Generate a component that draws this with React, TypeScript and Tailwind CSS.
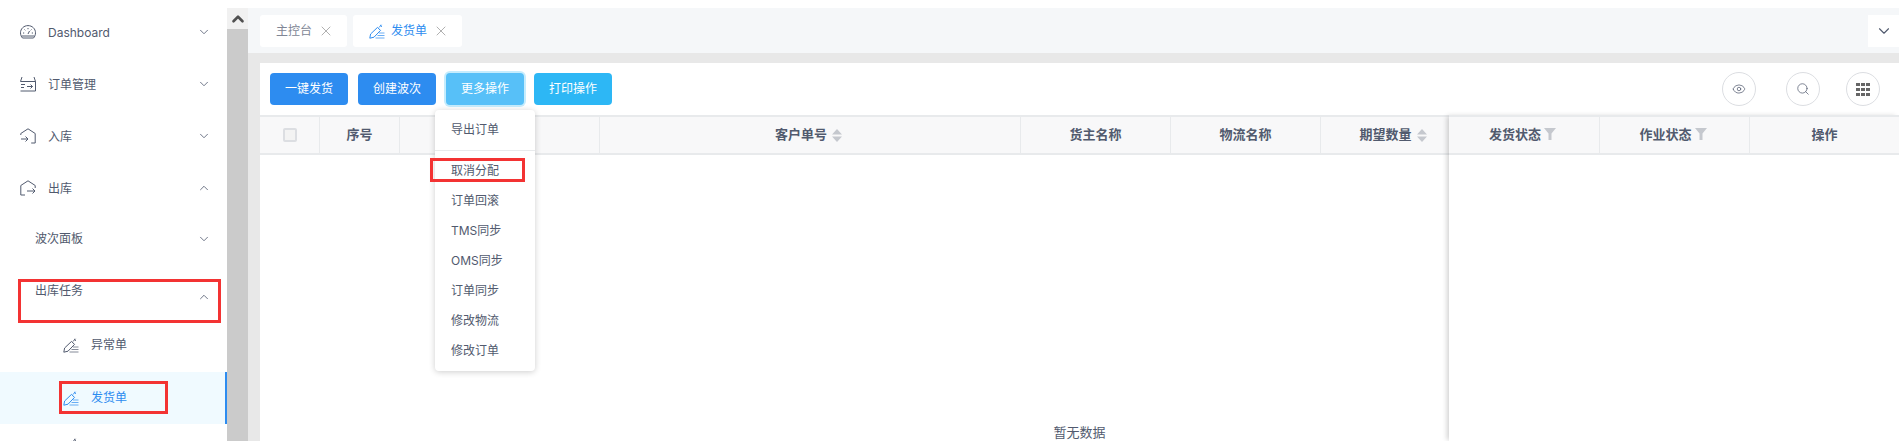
import React from "react";
import { ChevronDown, ChevronUp, Eye, Search, X } from "lucide-react";

const FONT = "font-['Inter','Noto_Sans_CJK_SC',sans-serif]";

const GaugeIcon = () => (
  <svg width="16" height="14" viewBox="0 0 16 14" fill="none" stroke="currentColor" strokeWidth="1">
    <path d="M2.5 13C1.2 11.6.5 9.8.5 7.8.5 3.8 3.8.6 8 .6s7.5 3.2 7.5 7.2c0 2-.7 3.8-2 5.2z" />
    <path d="M1.5 11h13M8 3v1.2M4.5 4.5l.8.8M11.5 4.5l-.8.8M3 8h1.2M11.8 8H13M8 9l1.5-3" />
  </svg>
);

const OrderIcon = () => (
  <svg width="16" height="16" viewBox="0 0 16 16" fill="none" stroke="currentColor" strokeWidth="1">
    <path d="M.5 5.5 2 1M15.5 5.5 14 1M.5 5.5h15v9.5H.5M15.5 5.5V15" />
    <path d="M1 8.5h4M1 11.5h3M7 10.5h5.5M10.5 8.5l2 2-2 2" />
  </svg>
);

const InboundIcon = () => (
  <svg width="16" height="16" viewBox="0 0 16 16" fill="none" stroke="currentColor" strokeWidth="1">
    <path d="M.8 7V5.5L8 .8l7.2 4.7V15h-4" />
    <path d="M1 11h7M5.5 8.5 8 11l-2.5 2.5" />
  </svg>
);

const OutboundIcon = () => (
  <svg width="16" height="16" viewBox="0 0 16 16" fill="none" stroke="currentColor" strokeWidth="1">
    <path d="M5 15H.8V5.5L8 .8l7.2 4.7V8" />
    <path d="M7 11h8M12.5 8.5 15 11l-2.5 2.5" />
  </svg>
);

const PenIcon = () => (
  <svg width="16" height="15" viewBox="0 0 16 15" fill="none" stroke="currentColor" strokeWidth="1">
    <path d="M.8 14.2 1.6 10l6.9-6.6 3 3L5 13.2z" />
    <path d="M10 3.5 12.5.8M11.2 1l1.8 1.8" />
    <path d="M10 9h5.5M8.5 11.5h7M6.5 14h9" opacity=".7" />
  </svg>
);

const SortIcon = () => (
  <svg width="10" height="13" viewBox="0 0 10 13" className="ml-[5px] text-[#c5c8ce]" fill="currentColor">
    <path d="M5 0l5 5.5H0zM5 13l5-5.5H0z" />
  </svg>
);

const FilterIcon = () => (
  <svg width="12" height="12" viewBox="0 0 12 12" className="mb-[3px] ml-[3px] text-[#c5c8ce]" fill="currentColor">
    <path d="M0 0h12L7.5 5.5V12h-3V5.5z" />
  </svg>
);

const GridIcon = () => (
  <svg width="14" height="13" viewBox="0 0 14 13" className="text-[#666]" fill="currentColor">
    <path d="M0 0h4v3H0zM5 0h4v3H5zM10 0h4v3h-4zM0 5h4v3H0zM5 5h4v3H5zM10 5h4v3h-4zM0 10h4v3H0zM5 10h4v3H5zM10 10h4v3h-4z" />
  </svg>
);

const MenuRow = ({
  icon,
  label,
  open,
  className,
}: {
  icon?: React.ReactNode;
  label: string;
  open?: boolean;
  className?: string;
}) => (
  <div className={`flex items-center justify-between pr-4 ${className}`}>
    <div className="flex items-center gap-3">
      {icon}
      <span className="pt-px">{label}</span>
    </div>
    {open ? <ChevronUp size={14} strokeWidth={1.4} /> : <ChevronDown size={14} strokeWidth={1.4} />}
  </div>
);

const Sidebar = () => (
  <aside className="relative w-[227px] shrink-0 bg-white text-[12px] text-[#515a6e]">
    <MenuRow icon={<GaugeIcon />} label="Dashboard" className="h-[50px] pb-[2px] pl-5" />
    <MenuRow icon={<OrderIcon />} label="订单管理" className="h-[52px] pl-5" />
    <MenuRow icon={<InboundIcon />} label="入库" className="h-[52px] pl-5" />
    <MenuRow icon={<OutboundIcon />} label="出库" open className="h-[52px] pl-5" />
    <MenuRow label="波次面板" className="h-[52px] pb-[3px] pl-[35px]" />
    <div className="relative flex h-[52px] justify-between pl-[35px] pr-4">
      <span className="pt-[16px]">出库任务</span>
      <ChevronUp size={14} strokeWidth={1.4} className="mt-[24px]" />
      <div className="absolute left-[18px] top-[13px] h-[44px] w-[203px] border-[3px] border-[#f33333]" />
    </div>
    <div className="flex h-[54px] items-center gap-3 pl-[63px]">
      <PenIcon />
      <span>异常单</span>
    </div>
    <div className="relative flex h-[52px] items-center gap-3 border-r-2 border-[#2d8cf0] bg-[#f0faff] pl-[63px] text-[#2d8cf0]">
      <PenIcon />
      <span>发货单</span>
      <div className="absolute left-[59px] top-[9px] h-[33px] w-[109px] border-[3px] border-[#f33333]" />
    </div>
    <div className="pl-[63px] pt-[14px]">
      <PenIcon />
    </div>
  </aside>
);

const Scrollbar = () => (
  <div className="w-[21px] shrink-0 bg-[#cbcbcb]">
    <div className="flex h-[21px] items-center justify-center bg-[#f1f1f1] text-[#505050]">
      <ChevronUp size={18} strokeWidth={3.5} />
    </div>
  </div>
);

const TabBar = () => (
  <div className="flex h-[45px] shrink-0 justify-between bg-[#f5f7f9] pl-3 pt-[7px] text-[12px]">
    <div className="flex gap-[6px]">
      <div className="flex h-[32px] w-[87px] items-center gap-[6px] rounded-[3px] bg-white pl-4 text-[#808695]">
        <span>主控台</span>
        <X size={16} strokeWidth={1} className="text-[#888]" />
      </div>
      <div className="flex h-[32px] w-[109px] items-center rounded-[3px] bg-white pl-4 text-[#2d8cf0]">
        <PenIcon />
        <span className="ml-[6px]">发货单</span>
        <X size={16} strokeWidth={1} className="ml-[6px] text-[#888]" />
      </div>
    </div>
    <div className="flex h-[32px] w-[31px] items-center justify-center bg-white text-[#515a6e]">
      <ChevronDown size={18} strokeWidth={1.5} />
    </div>
  </div>
);

const buttons = [
  { label: "一键发货", cls: "bg-[#2d8cf0]" },
  { label: "创建波次", cls: "bg-[#2d8cf0]" },
  { label: "更多操作", cls: "bg-[#57c0f8] ring-2 ring-[#c5ecfd]" },
  { label: "打印操作", cls: "bg-[#2db7f5]" },
];

const Toolbar = () => (
  <div className="flex h-[52px] shrink-0 items-center justify-between pl-[10px] pr-[19px]">
    <div className="flex gap-[10px]">
      {buttons.map((b) => (
        <button
          key={b.label}
          className={`flex h-[32px] w-[78px] items-center justify-center rounded-[4px] text-[12px] text-white ${b.cls}`}
        >
          {b.label}
        </button>
      ))}
    </div>
    <div className="flex items-center">
      <div className="flex h-[34px] w-[34px] items-center justify-center rounded-full border border-[#dcdee2] text-[#515a6e]">
        <Eye size={14} strokeWidth={1.25} />
      </div>
      <div className="ml-[30px] flex h-[34px] w-[34px] items-center justify-center rounded-full border border-[#dcdee2] text-[#515a6e]">
        <Search size={14} strokeWidth={1.25} />
      </div>
      <div className="ml-[26px] flex h-[34px] w-[34px] items-center justify-center rounded-full border border-[#dcdee2]">
        <GridIcon />
      </div>
    </div>
  </div>
);

const HeadCell = ({ className, children }: { className: string; children?: React.ReactNode }) => (
  <div className={`flex h-full items-center justify-center border-r border-[#e8eaec] ${className}`}>{children}</div>
);

const menuItems = ["订单回滚", "TMS同步", "OMS同步", "订单同步", "修改物流", "修改订单"];

const Dropdown = () => (
  <div className="absolute left-[175px] top-[47px] z-20 w-[100px] rounded-[4px] bg-white py-[5px] text-[12px] text-[#515a6e] shadow-[0_1px_6px_rgba(0,0,0,0.2)]">
    <div className="flex h-[30px] items-center pl-4">导出订单</div>
    <div className="mb-[5px] mt-[5px] h-px bg-[#e8eaec]" />
    <div className="relative flex h-[30px] items-center pl-4">
      取消分配
      <div className="absolute left-[-5px] top-[2px] h-[24px] w-[95px] border-[3px] border-[#f33333]" />
    </div>
    {menuItems.map((m) => (
      <div key={m} className="flex h-[30px] items-center pl-4">
        {m}
      </div>
    ))}
  </div>
);

const Table = () => (
  <div className="flex min-h-0 flex-1 text-[13px] text-[#515a6e]">
    <div className="w-[1189px] shrink-0">
      <div className="flex h-[40px] border-y-2 border-[#e8eaec] bg-[#f8f8f9] font-bold">
        <HeadCell className="w-[60px]">
          <span className="h-[14px] w-[14px] rounded-[2px] border-2 border-[#dcdee2] bg-[#f3f3f3]" />
        </HeadCell>
        <HeadCell className="w-[80px]">序号</HeadCell>
        <HeadCell className="w-[200px]" />
        <HeadCell className="w-[421px] pr-[3px]">
          客户单号
          <SortIcon />
        </HeadCell>
        <HeadCell className="w-[150px]">货主名称</HeadCell>
        <HeadCell className="w-[150px]">物流名称</HeadCell>
        <div className="flex w-[128px] items-center justify-center pl-[16px]">
          期望数量
          <SortIcon />
        </div>
      </div>
      <div className="w-[1639px] pt-[268px] text-center">暂无数据</div>
    </div>
    <div className="relative z-10 flex-1 bg-white shadow-[-3px_0_5px_-1px_rgba(0,0,0,0.18)]">
      <div className="flex h-[40px] border-y-2 border-[#e8eaec] bg-[#f8f8f9] font-bold">
        <HeadCell className="w-[151px] pr-[3px]">
          发货状态
          <FilterIcon />
        </HeadCell>
        <HeadCell className="w-[150px] pr-[3px]">
          作业状态
          <FilterIcon />
        </HeadCell>
        <div className="flex flex-1 items-center justify-center">操作</div>
      </div>
    </div>
  </div>
);

export default function App() {
  return (
    <div className={`flex h-[441px] flex-col overflow-hidden bg-white ${FONT}`}>
      <div className="h-2 shrink-0 bg-white shadow-[0_1px_2px_rgba(0,0,0,0.06)]" />
      <div className="flex min-h-0 flex-1">
        <Sidebar />
        <Scrollbar />
        <main className="flex min-w-0 flex-1 flex-col bg-[#e8e8e8]">
          <TabBar />
          <div className="relative ml-3 mt-[10px] flex min-h-0 flex-1 flex-col bg-white">
            <Toolbar />
            <Table />
            <Dropdown />
          </div>
        </main>
      </div>
    </div>
  );
}
